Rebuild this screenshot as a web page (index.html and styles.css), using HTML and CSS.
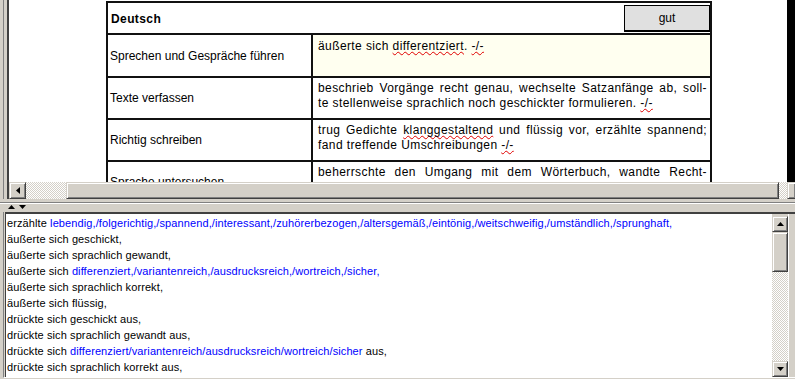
FILE: index.html
```html
<!DOCTYPE html>
<html lang="de">

<head>
    <meta charset="UTF-8">
    <title>Zeugnis-Bemerkungen</title>
    <link rel="stylesheet" href="styles.css">
</head>

<body>

    <div class="top-pane">
        <div class="top-inner">
            <div class="top-body">
                <div class="sheet">
                    <table class="grades">
                        <colgroup>
                            <col class="col-area">
                            <col class="col-remark">
                        </colgroup>
                        <tr class="row-head">
                            <td colspan="2">
                                <div class="head-row">
                                    <span class="subject">Deutsch</span>
                                    <span class="grade">gut</span>
                                </div>
                            </td>
                        </tr>
                        <tr class="row-1">
                            <td class="area">Sprechen und Gespräche führen</td>
                            <td class="remark current">äußerte sich <span class="typo">differentziert</span>. <span class="typo">-/-</span></td>
                        </tr>
                        <tr class="row-2">
                            <td class="area">Texte verfassen</td>
                            <td class="remark">
                                <span class="just">beschrieb Vorgänge recht genau, wechselte Satzanfänge ab, soll-</span>
                                <span>te stellenweise sprachlich noch geschickter formulieren. <span class="typo">-/-</span></span>
                            </td>
                        </tr>
                        <tr class="row-3">
                            <td class="area">Richtig schreiben</td>
                            <td class="remark">
                                <span class="just">trug Gedichte <span class="typo">klanggestaltend</span> und flüssig vor, erzählte spannend;</span>
                                <span>fand treffende Umschreibungen <span class="typo">-/-</span></span>
                            </td>
                        </tr>
                        <tr class="row-4">
                            <td class="area">Sprache untersuchen</td>
                            <td class="remark">
                                <span class="just">beherrschte den Umgang mit dem Wörterbuch, wandte Recht-</span>
                                <span class="just">schreibregeln weitgehend sicher auf und fand Fehler selbständig,</span>
                            </td>
                        </tr>
                    </table>
                </div>
                <div class="dark-bar"></div>
            </div>
            <div class="hscroll">
                <div class="sb-btn">
                    <svg width="4" height="7" viewBox="0 0 4 7"><path d="M0 3.5 L4 0 L4 7 Z" fill="#000"/></svg>
                </div>
                <div class="sb-track track-left"></div>
                <div class="sb-thumb"></div>
                <div class="sb-track track-right"></div>
                <div class="sb-btn clipped"></div>
            </div>
        </div>
    </div>

    <div class="splitter">
        <div class="split-line"></div>
        <div class="split-arrows">
            <svg width="7" height="4" viewBox="0 0 7 4"><path d="M0 4 L3.5 0 L7 4 Z" fill="#000"/></svg>
            <svg width="7" height="4" viewBox="0 0 7 4"><path d="M0 0 L7 0 L3.5 4 Z" fill="#000"/></svg>
        </div>
    </div>

    <div class="bottom-pane">
        <div class="bottom-inner">
            <div class="phrases">
                <div>erzählte <span class="alt">lebendig,/folgerichtig,/spannend,/interessant,/zuhörerbezogen,/altersgemäß,/eintönig,/weitschweifig,/umständlich,/sprunghaft,</span></div>
                <div>äußerte sich geschickt,</div>
                <div>äußerte sich sprachlich gewandt,</div>
                <div>äußerte sich <span class="alt">differenziert,/variantenreich,/ausdrucksreich,/wortreich,/sicher,</span></div>
                <div>äußerte sich sprachlich korrekt,</div>
                <div>äußerte sich flüssig,</div>
                <div>drückte sich geschickt aus,</div>
                <div>drückte sich sprachlich gewandt aus,</div>
                <div>drückte sich <span class="alt">differenziert/variantenreich/ausdrucksreich/wortreich/sicher</span> aus,</div>
                <div>drückte sich sprachlich korrekt aus,</div>
            </div>
            <div class="vscroll">
                <div class="sb-btn vbtn">
                    <svg width="7" height="4" viewBox="0 0 7 4"><path d="M0 4 L3.5 0 L7 4 Z" fill="#000"/></svg>
                </div>
                <div class="sb-thumb vthumb"></div>
                <div class="sb-track vtrack"></div>
                <div class="sb-btn vbtn">
                    <svg width="7" height="4" viewBox="0 0 7 4"><path d="M0 0 L7 0 L3.5 4 Z" fill="#000"/></svg>
                </div>
            </div>
            <div class="edge"></div>
        </div>
    </div>

</body>

</html>
```

FILE: styles.css
```css
body {
    margin: 0;
    width: 795px;
    height: 379px;
    overflow: hidden;
    background-color: #d4d0c8;
    font-family: "Liberation Sans", Arial, sans-serif;
}

/* upper pane: the report sheet */

.top-pane {
    height: 199px;
    margin-left: 3px;
    padding-left: 3px;
    border-left: 1px solid #808080;
}

.top-inner {
    height: 100%;
    display: flex;
    flex-direction: column;
    border-left: 2px solid #404040;
}

.top-body {
    height: 182px;
    display: flex;
}

.sheet {
    flex: 1;
    background-color: #fff;
    overflow: hidden;
    padding: 1px 0 0 97px;
}

.dark-bar {
    width: 8px;
    background-color: #000;
}

.grades {
    width: 606px;
    table-layout: fixed;
    border-collapse: separate;
    border-spacing: 0;
    border-top: 2px solid #111;
    border-left: 2px solid #111;
    font-size: 12px;
    color: #000;
}

.col-area {
    width: 205px;
}

.col-remark {
    width: 399px;
}

.grades td {
    border-right: 2px solid #111;
    border-bottom: 2px solid #111;
    padding: 0;
}

.row-head td {
    padding: 2px 0 1px 3px;
}

.head-row {
    display: flex;
    justify-content: space-between;
    align-items: center;
}

.subject {
    font-weight: bold;
    letter-spacing: 0.4px;
}

.grade {
    width: 86px;
    height: 27px;
    box-sizing: border-box;
    display: flex;
    align-items: center;
    justify-content: center;
    background-color: #e0e0e0;
    border: 1px solid #000;
    border-bottom-width: 2px;
}

.row-1 .area {
    height: 41px;
}

.row-2 .area {
    height: 40px;
}

.row-3 .area {
    height: 40px;
}

.row-4 .area {
    height: 40px;
}

.area {
    padding-left: 2px !important;
    vertical-align: middle;
}

.remark {
    vertical-align: top;
    padding: 3px 3px 0 5px !important;
    line-height: 15px;
    letter-spacing: 0.4px;
}

.remark span {
    display: block;
}

.remark span.typo {
    display: inline;
}

.remark .just {
    text-align: justify;
    text-align-last: justify;
}

.row-1 .remark {
    padding-top: 4px !important;
}

.current {
    background-color: #fffff0;
}

.typo {
    text-decoration: underline wavy #e00000;
    text-decoration-thickness: 1px;
    text-decoration-skip-ink: none;
    text-underline-offset: 1px;
}

/* classic scroll bars */

.hscroll {
    height: 17px;
    display: flex;
}

.sb-btn {
    box-sizing: border-box;
    width: 17px;
    display: flex;
    align-items: center;
    justify-content: center;
    background-color: #d4d0c8;
    border-top: 1px solid #d4d0c8;
    border-left: 1px solid #d4d0c8;
    border-right: 1px solid #404040;
    border-bottom: 1px solid #404040;
    box-shadow: inset 1px 1px 0 #fff, inset -1px -1px 0 #808080;
}

.sb-btn.clipped {
    width: 8px;
    border-right: none;
}

.sb-track {
    background: repeating-conic-gradient(#fff 0 25%, #d4d0c8 0 50%) 0 0 / 2px 2px;
}

.track-left {
    width: 40px;
}

.track-right {
    width: 8px;
}

.sb-thumb {
    flex: 1;
    box-sizing: border-box;
    background-color: #d4d0c8;
    border-top: 1px solid #d4d0c8;
    border-left: 1px solid #d4d0c8;
    border-right: 1px solid #404040;
    border-bottom: 1px solid #404040;
    box-shadow: inset 1px 1px 0 #fff, inset -1px -1px 0 #808080;
}

/* splitter between the panes */

.splitter {
    height: 10px;
}

.split-line {
    height: 1px;
    margin-top: 3px;
    background-color: #808080;
    border-bottom: 1px solid #fff;
}

.split-arrows {
    display: flex;
    gap: 4px;
    padding: 1px 0 0 8px;
}

.split-arrows svg {
    display: block;
}

/* lower pane: the phrase list */

.bottom-pane {
    margin-left: 3px;
    padding-left: 1px;
    border-left: 1px solid #808080;
    border-bottom: 1px solid #fff;
}

.bottom-inner {
    height: 163px;
    display: flex;
    border-top: 2px solid #404040;
    border-left: 1px solid #404040;
}

.phrases {
    flex: 1;
    background-color: #fff;
    padding: 1px 0 0 1px;
    font-size: 11px;
    line-height: 16px;
    letter-spacing: 0.1px;
    color: #000;
    white-space: nowrap;
    overflow: hidden;
}

.alt {
    color: #0000ff;
}

.vscroll {
    width: 16px;
    display: flex;
    flex-direction: column;
    padding-top: 2px;
    background-color: #d4d0c8;
}

.vbtn {
    width: 16px;
    height: 16px;
}

.vthumb {
    flex: none;
    height: 40px;
}

.vtrack {
    flex: 1;
}

.edge {
    width: 7px;
    border-left: 1px solid #fff;
    box-sizing: border-box;
}
```
